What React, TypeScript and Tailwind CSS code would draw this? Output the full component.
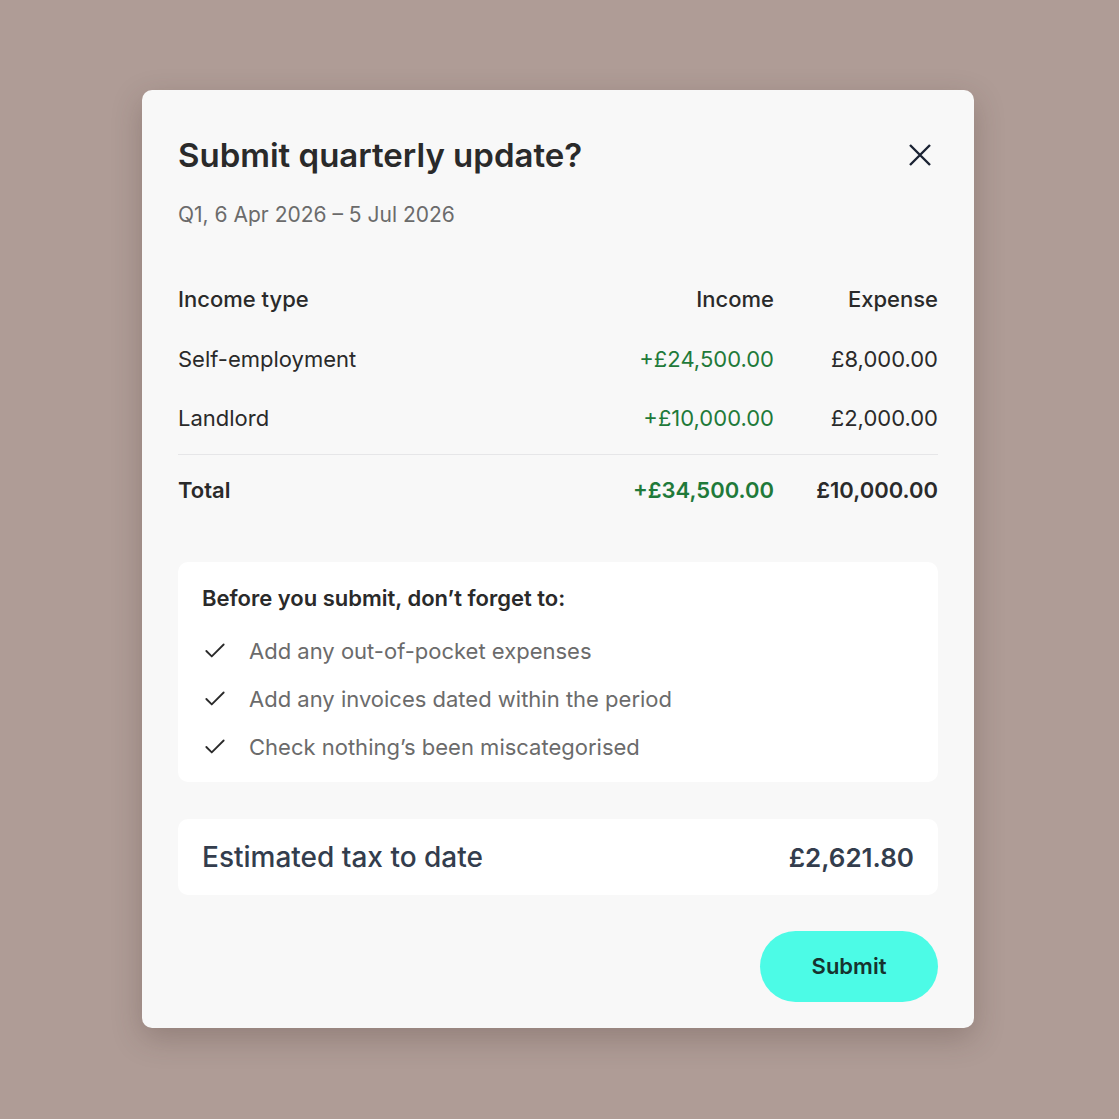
import React from "react";
import { Check } from "lucide-react";

const rows = [
  { type: "Self-employment", income: "+£24,500.00", expense: "£8,000.00" },
  { type: "Landlord", income: "+£10,000.00", expense: "£2,000.00" },
];

const reminders = [
  "Add any out-of-pocket expenses",
  "Add any invoices dated within the period",
  "Check nothing’s been miscategorised",
];

const App = () => {
  return (
    <div
      className="min-h-screen w-full bg-[#af9c96] flex pl-[142px] pt-[90px]"
      style={{ fontFamily: "Inter, 'Noto Sans', sans-serif" }}
    >
      <div className="w-[832px] h-[938px] bg-[#f8f8f8] rounded-[10px] shadow-[0_10px_30px_rgba(60,40,35,0.25)] px-[36px] pt-[45px] flex flex-col">
        {/* Header */}
        <div className="flex items-center justify-between">
          <h1 className="text-[33px] leading-[40px] font-semibold text-[#2a2a2a]">
            Submit quarterly update?
          </h1>
          <button className="w-[24px] h-[24px] mr-[6px] text-[#1a2233]">
            <svg viewBox="0 0 24 24" width="24" height="24" fill="none" stroke="currentColor" strokeWidth="2.4">
              <path d="M2 2 L22 22 M22 2 L2 22" />
            </svg>
          </button>
        </div>
        <p className="mt-[26px] text-[21px] leading-[28px] text-[#6b6b6b]">
          Q1, 6 Apr 2026 – 5 Jul 2026
        </p>

        {/* Table */}
        <div className="mt-[40px] text-[22px] leading-[28px]">
          <div className="h-[60px] flex items-center font-medium text-[#2a2a2a]">
            <div className="flex-1">Income type</div>
            <div className="w-[200px] text-right">Income</div>
            <div className="w-[164px] text-right">Expense</div>
          </div>
          {rows.map((r) => (
            <div key={r.type} className="h-[59px] flex items-center text-[#2a2a2a]">
              <div className="flex-1">{r.type}</div>
              <div className="w-[200px] text-right text-[#1f7a3a]">{r.income}</div>
              <div className="w-[164px] text-right">{r.expense}</div>
            </div>
          ))}
          <div className="mt-[7px] h-px bg-[#e6e6e8]" />
          <div className="pt-[21px] flex items-center font-semibold text-[#2a2a2a]">
            <div className="flex-1">Total</div>
            <div className="w-[200px] text-right text-[#1f7a3a]">+£34,500.00</div>
            <div className="w-[164px] text-right">£10,000.00</div>
          </div>
        </div>

        {/* Reminders */}
        <div className="mt-[58px] bg-white rounded-[10px] px-[24px] pt-[22px] pb-[21px]">
          <p className="text-[22px] leading-[28px] font-semibold text-[#2a2a2a]">
            Before you submit, don’t forget to:
          </p>
          <ul className="mt-[25px] flex flex-col gap-[20px]">
            {reminders.map((item) => (
              <li key={item} className="flex items-center gap-[21px] text-[22px] leading-[28px] text-[#6b6b6b]">
                <Check size={26} strokeWidth={1.7} className="text-[#2a2a2a] shrink-0" />
                {item}
              </li>
            ))}
          </ul>
        </div>

        {/* Estimated tax */}
        <div className="mt-[37px] h-[76px] bg-white rounded-[10px] px-[24px] flex items-center justify-between font-medium text-[#333d4d]">
          <span className="text-[28px]">Estimated tax to date</span>
          <span className="text-[26px] font-semibold">£2,621.80</span>
        </div>

        {/* Footer */}
        <div className="mt-[36px] flex justify-end">
          <button className="w-[178px] h-[71px] rounded-full bg-[#4cfbe6] text-[22px] font-semibold text-[#16332f]">
            Submit
          </button>
        </div>
      </div>
    </div>
  );
};

export default App;
